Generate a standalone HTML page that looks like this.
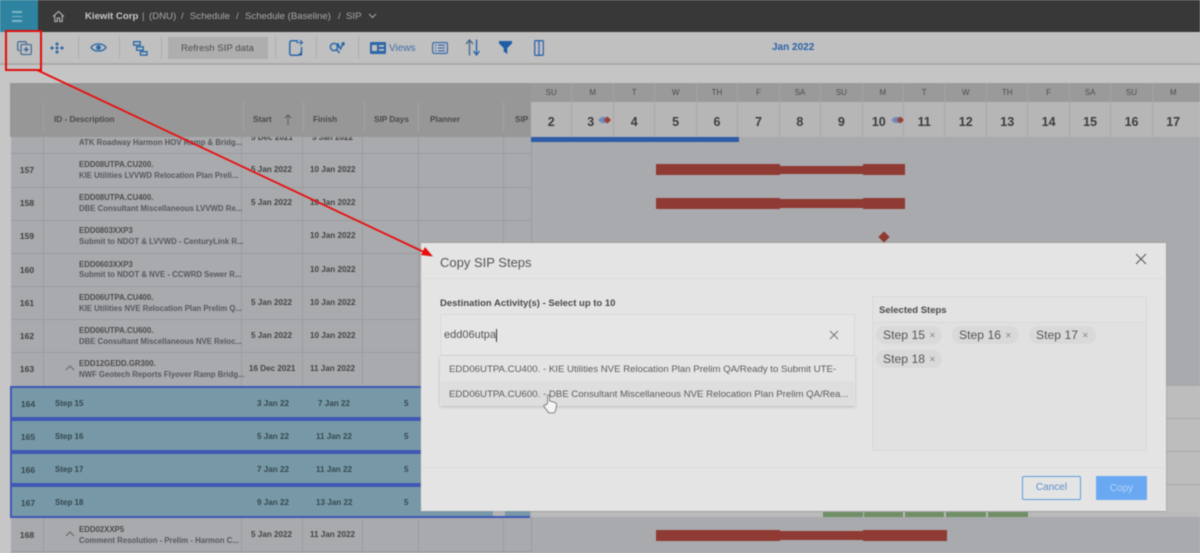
<!DOCTYPE html>
<html><head><meta charset="utf-8">
<style>
*{box-sizing:border-box;margin:0;padding:0}
html,body{width:1200px;height:553px;overflow:hidden;background:#c5c5c5;font-family:"Liberation Sans",sans-serif}
#w{position:absolute;left:0;top:0;width:1200px;height:553px;overflow:hidden;background:#c5c5c5;filter:blur(.4px)}
.a{position:absolute}
.t{position:absolute;white-space:nowrap;color:#444}
.b{font-weight:bold}
.hd{font-size:8.2px;font-weight:bold;color:#4a4a4a;top:115px}
.dw{position:absolute;top:83px;height:19px;width:41.45px;text-align:center;font-size:8px;line-height:19px;color:#4c4c4c;border-right:1px solid #a5a5a5}
.dn{position:absolute;top:102px;height:35px;width:41.45px;text-align:center;font-size:12.5px;line-height:40px;color:#3d3d3d;font-weight:bold;border-right:1px solid #a6a6a6}
.n{position:absolute;left:11px;width:32px;text-align:center;font-size:8.5px;font-weight:bold;color:#3f3f3f;line-height:10px}
.l1{position:absolute;left:79px;font-size:7.8px;font-weight:bold;color:#4c4c4c;white-space:nowrap;line-height:10px}
.l2{position:absolute;left:79px;font-size:7.8px;font-weight:bold;color:#56585c;white-space:nowrap;line-height:10px}
.d{position:absolute;font-size:8.1px;color:#444;white-space:nowrap;line-height:10px;font-weight:bold}
.hl{position:absolute;left:11px;width:520px;height:1px;background:#9a9b9e}
.v{position:absolute;width:1px;background:#9b9c9f}
.sel{position:absolute;left:10px;width:412px;height:33px;background:#7799a7;border:2px solid #3e58b4;border-right:0}
.st{position:absolute;left:55px;font-size:8px;font-weight:bold;color:#34474f;line-height:10px}
.bar{position:absolute;background:#8f3a33}
.chip{position:absolute;height:18px;border-radius:9px;background:#d9d9d9;font-size:12.2px;color:#555;line-height:18px;padding-left:7px;white-space:nowrap}
.chip span{font-size:8px;color:#888;margin-left:4px;position:relative;top:-1px}
.sep{position:absolute;top:36px;width:1px;height:23px;background:#adadad}
.bc{position:absolute;top:11px;font-size:9.6px;color:#a8a8a8;white-space:nowrap}
svg{position:absolute;overflow:visible}
</style></head>
<body><div id="w">
<!-- top bar -->
<div class="a" style="left:0;top:0;width:1200px;height:32px;background:#383838"></div>
<div class="a" style="left:0;top:0;width:38px;height:32px;background:#2e83a1"></div>
<div class="a" style="left:12px;top:11px;width:10px;height:1.5px;background:#7fb5c9"></div>
<div class="a" style="left:12px;top:15.5px;width:10px;height:1.5px;background:#7fb5c9"></div>
<div class="a" style="left:12px;top:20px;width:10px;height:1.5px;background:#7fb5c9"></div>
<svg style="left:52px;top:10px" width="13" height="13" viewBox="0 0 13 13" fill="none" stroke="#b5b5b5" stroke-width="1.1"><path d="M1 6.5 6.5 1.5 12 6.5M2.8 5.5V11.5H5.3V8H7.7V11.5H10.2V5.5"/></svg>
<div class="t b" style="left:85px;top:11px;font-size:9.6px;color:#c8c8c8">Kiewit Corp</div>
<div class="bc" style="left:142px">|</div><div class="bc" style="left:149px">(DNU)</div><div class="bc" style="left:181px">/</div><div class="bc" style="left:190px">Schedule</div><div class="bc" style="left:236px">/</div><div class="bc" style="left:245px">Schedule (Baseline)</div><div class="bc" style="left:338px">/</div><div class="bc" style="left:346px">SIP</div>
<svg style="left:368px;top:13px" width="9" height="6" fill="none" stroke="#a8a8a8" stroke-width="1"><path d="M1 1 4.5 4.5 8 1"/></svg>

<!-- toolbar -->
<div class="a" style="left:0;top:32px;width:1200px;height:32px;background:#c0c0c0"></div>
<div class="a" style="left:0;top:63px;width:1200px;height:2px;background:#a9a9a9"></div>
<div class="sep" style="left:78px"></div><div class="sep" style="left:119px"></div><div class="sep" style="left:161px"></div>
<div class="sep" style="left:275px"></div><div class="sep" style="left:316px"></div><div class="sep" style="left:358px"></div>
<svg style="left:17px;top:41px" width="15" height="14" fill="none" stroke="#4a6f94" stroke-width="1.3"><path d="M3 9.5H2Q.7 9.5 .7 8.2V2Q.7 .7 2 .7H8Q9.3 .7 9.3 2V3"/><rect x="4" y="3.5" width="10.3" height="10" rx="1.2"/><path d="M9.2 6V11M6.7 8.5H11.7" stroke="#2d5f96"/></svg>
<svg style="left:50px;top:42px" width="14" height="12" fill="#2d6aa8"><circle cx="7" cy="6" r="1.5"/><path d="M7 0 9 2 7 4 5 2ZM7 8 9 10 7 12 5 10ZM0 6 2 4 4 6 2 8ZM14 6 12 4 10 6 12 8Z"/></svg>
<svg style="left:90px;top:42px" width="17" height="11" fill="none" stroke="#2d6aa8" stroke-width="1.4"><path d="M1 5.5C4 .8 13 .8 16 5.5 13 10.2 4 10.2 1 5.5Z"/><circle cx="8.5" cy="5.5" r="2.4" fill="#2d6aa8" stroke="none"/></svg>
<svg style="left:133px;top:41px" width="15" height="15" fill="none" stroke="#2d6aa8" stroke-width="1.4"><rect x=".7" y=".7" width="6.5" height="3.4"/><rect x="3.7" y="5.8" width="6.5" height="3.4"/><rect x="7.5" y="10.7" width="6.5" height="3.4"/></svg>
<div class="a" style="left:168px;top:37px;width:100px;height:22px;background:#aeaeae"></div>
<div class="t" style="left:181px;top:43px;font-size:9.6px;color:#4d4d4d">Refresh SIP data</div>
<svg style="left:289px;top:39px" width="15" height="17" fill="none" stroke="#2d6aa8" stroke-width="1.5"><path d="M9 1.8H2.5Q.8 1.8 .8 3.5V14.5Q.8 16.2 2.5 16.2H9.5L12.5 13.5V8"/><path d="M7 3.5H13M11 1 13.5 3.5 11 6" stroke-width="1.1"/><path d="M9 16.5 13 13V16.5Z" fill="#1f56a0" stroke="none"/></svg>
<svg style="left:329px;top:41px" width="17" height="12" fill="none" stroke="#2d6aa8" stroke-width="1.5"><circle cx="5" cy="6" r="3.6"/><path d="M7.5 8.5 10.5 12M8.5 2 11.5 8 15 1"/><circle cx="9" cy="5" r="1" fill="#2d6aa8"/><circle cx="14" cy="3" r="1" fill="#2d6aa8"/></svg>
<svg style="left:370px;top:42px" width="16" height="12"><rect width="16" height="12" rx="1" fill="#2d66aa"/><rect x="2" y="3" width="5" height="6" fill="#c0c0c0"/><rect x="9" y="3" width="5" height="1.8" fill="#c0c0c0"/><rect x="9" y="7" width="5" height="1.8" fill="#c0c0c0"/></svg>
<div class="t" style="left:389px;top:43px;font-size:10px;color:#3f6fa6">Views</div>
<svg style="left:432px;top:42px" width="16" height="12" fill="none" stroke="#2d66aa" stroke-width="1.1"><rect x=".6" y=".6" width="14.8" height="10.8" rx="1.5"/><path d="M3 3.2H4.5M6 3.2H13M3 6H4.5M6 6H13M3 8.8H4.5M6 8.8H13"/></svg>
<svg style="left:465px;top:39px" width="16" height="17" fill="none" stroke="#2d66aa" stroke-width="1.4"><path d="M4.5 16.5V1.5M1 5 4.5 1 8 5" stroke="#4a6a8a"/><path d="M11.5 .5V15.5M8.5 12 11.5 16 14.5 12"/></svg>
<svg style="left:499px;top:41px" width="13" height="13" fill="#1f5fa8"><path d="M0 0H13V2.5L8.3 7V13L4.7 10.5V7L0 2.5Z"/></svg>
<svg style="left:534px;top:40px" width="10" height="16" fill="none" stroke="#2d66aa" stroke-width="1.3"><rect x=".7" y=".7" width="8.6" height="14.6" rx="1"/><path d="M5 1V15"/></svg>
<div class="t b" style="left:772px;top:42px;font-size:10px;color:#2a63a8">Jan 2022</div>

<!-- table header -->
<div class="a" style="left:10px;top:83px;width:521px;height:54px;background:#979797"></div>
<div class="a" style="left:531px;top:83px;width:669px;height:19px;background:#9a9a9a"></div>
<div class="a" style="left:531px;top:102px;width:669px;height:35px;background:#b6b6b6"></div>
<div class="a" style="left:43px;top:102px;width:1px;height:35px;background:#a0a0a0"></div>
<div class="a" style="left:243px;top:102px;width:1px;height:35px;background:#a3a3a3"></div>
<div class="a" style="left:303px;top:102px;width:1px;height:35px;background:#a3a3a3"></div>
<div class="a" style="left:364px;top:102px;width:1px;height:35px;background:#a3a3a3"></div>
<div class="a" style="left:418px;top:102px;width:1px;height:35px;background:#a3a3a3"></div>
<div class="a" style="left:503px;top:102px;width:1px;height:35px;background:#a3a3a3"></div>
<div class="t hd" style="left:54px">ID - Description</div>
<div class="t hd" style="left:253px">Start</div>
<svg style="left:284px;top:114px" width="8" height="11" fill="none" stroke="#5c5c5c"><path d="M4 11V1M1 4 4 1 7 4"/></svg>
<div class="t hd" style="left:313px">Finish</div>
<div class="t hd" style="left:374px">SIP Days</div>
<div class="t hd" style="left:430px">Planner</div>
<div class="t hd" style="left:515px">SIP</div>

<!-- calendar header -->
<div class="dw" style="left:531px">SU</div><div class="dw" style="left:572.5px">M</div><div class="dw" style="left:614px">T</div><div class="dw" style="left:655.4px">W</div><div class="dw" style="left:696.8px">TH</div><div class="dw" style="left:738.3px">F</div><div class="dw" style="left:779.7px">SA</div><div class="dw" style="left:821.2px">SU</div><div class="dw" style="left:862.6px">M</div><div class="dw" style="left:904px">T</div><div class="dw" style="left:945.5px">W</div><div class="dw" style="left:987px">TH</div><div class="dw" style="left:1028.4px">F</div><div class="dw" style="left:1069.9px">SA</div><div class="dw" style="left:1111.3px">SU</div><div class="dw" style="left:1152.7px;width:48px;padding-right:6px">M</div>
<div class="dn" style="left:531px">2</div><div class="dn" style="left:572.5px;padding-right:4px">3</div><div class="dn" style="left:614px">4</div><div class="dn" style="left:655.4px">5</div><div class="dn" style="left:696.8px">6</div><div class="dn" style="left:738.3px">7</div><div class="dn" style="left:779.7px">8</div><div class="dn" style="left:821.2px">9</div><div class="dn" style="left:862.6px;padding-right:8px">10</div><div class="dn" style="left:904px">11</div><div class="dn" style="left:945.5px">12</div><div class="dn" style="left:987px">13</div><div class="dn" style="left:1028.4px">14</div><div class="dn" style="left:1069.9px">15</div><div class="dn" style="left:1111.3px">16</div><div class="dn" style="left:1152.7px;width:48px;padding-right:6px">17</div>
<svg style="left:598px;top:116px" width="15" height="8"><path d="M3 1 0 4 3 7H6V1Z" fill="#7b8fb8"/><path d="M6 1 3 4 6 7H9V1Z" fill="#6a84b5"/><path d="M9.5 .5 13 4 9.5 7.5 6 4Z" fill="#a33a35"/></svg>
<svg style="left:891px;top:116px" width="15" height="8"><path d="M3 1 0 4 3 7H6V1Z" fill="#7b8fb8"/><path d="M6 1 3 4 6 7H9V1Z" fill="#6a84b5"/><path d="M9.5 .5 13 4 9.5 7.5 6 4Z" fill="#a33a35"/></svg>

<!-- body -->
<div class="a" style="left:11px;top:137px;width:1189px;height:416px;background:#a9aaad"></div>
<div class="a" style="left:0;top:83px;width:10px;height:470px;background:#c6c6c6"></div>
<div class="v" style="left:43px;top:137px;height:249px"></div>
<div class="v" style="left:241px;top:137px;height:249px"></div>
<div class="v" style="left:302px;top:137px;height:249px"></div>
<div class="v" style="left:362px;top:137px;height:249px"></div>
<div class="v" style="left:418px;top:137px;height:249px"></div>
<div class="v" style="left:503px;top:137px;height:249px"></div>
<div class="v" style="left:531px;top:137px;height:416px"></div>
<div class="hl" style="top:153px"></div><div class="hl" style="top:187px"></div><div class="hl" style="top:220px"></div><div class="hl" style="top:253px"></div><div class="hl" style="top:286px"></div><div class="hl" style="top:319px"></div><div class="hl" style="top:352px"></div><div class="hl" style="top:551px"></div>
<div class="v" style="left:43px;top:518px;height:35px"></div>
<div class="v" style="left:241px;top:518px;height:35px"></div>
<div class="v" style="left:302px;top:518px;height:35px"></div>
<div class="v" style="left:362px;top:518px;height:35px"></div>
<div class="v" style="left:418px;top:518px;height:35px"></div>
<div class="v" style="left:503px;top:518px;height:35px"></div>

<div class="l2" style="top:138px">ATK Roadway Harmon HOV Ramp &amp; Bridg...</div>
<div class="d" style="left:251px;top:133px">5 Dec 2021</div><div class="d" style="left:312px;top:133px">5 Jan 2022</div>
<div class="a" style="left:10px;top:132px;width:521px;height:5px;background:#979797"></div>

<div class="n" style="top:165px">157</div><div class="l1" style="top:160px">EDD08UTPA.CU200.</div><div class="l2" style="top:171px">KIE Utilities LVVWD Relocation Plan Preli...</div><div class="d" style="left:251px;top:165px">5 Jan 2022</div><div class="d" style="left:310px;top:165px">10 Jan 2022</div>
<div class="n" style="top:198px">158</div><div class="l1" style="top:193px">EDD08UTPA.CU400.</div><div class="l2" style="top:204px">DBE Consultant Miscellaneous LVVWD Re...</div><div class="d" style="left:251px;top:198px">5 Jan 2022</div><div class="d" style="left:310px;top:198px">10 Jan 2022</div>
<div class="n" style="top:231px">159</div><div class="l1" style="top:226px">EDD0803XXP3</div><div class="l2" style="top:237px">Submit to NDOT &amp; LVVWD - CenturyLink R...</div><div class="d" style="left:310px;top:231px">10 Jan 2022</div>
<div class="n" style="top:265px">160</div><div class="l1" style="top:260px">EDD0603XXP3</div><div class="l2" style="top:270px">Submit to NDOT &amp; NVE - CCWRD Sewer R...</div><div class="d" style="left:310px;top:265px">10 Jan 2022</div>
<div class="n" style="top:298px">161</div><div class="l1" style="top:293px">EDD06UTPA.CU400.</div><div class="l2" style="top:304px">KIE Utilities NVE Relocation Plan Prelim Q...</div><div class="d" style="left:251px;top:298px">5 Jan 2022</div><div class="d" style="left:310px;top:298px">10 Jan 2022</div>
<div class="n" style="top:331px">162</div><div class="l1" style="top:326px">EDD06UTPA.CU600.</div><div class="l2" style="top:337px">DBE Consultant Miscellaneous NVE Reloc...</div><div class="d" style="left:251px;top:331px">5 Jan 2022</div><div class="d" style="left:310px;top:331px">10 Jan 2022</div>
<div class="n" style="top:364px">163</div><div class="l1" style="top:359px">EDD12GEDD.GR300.</div><div class="l2" style="top:370px">NWF Geotech Reports Flyover Ramp Bridg...</div><div class="d" style="left:249px;top:364px">16 Dec 2021</div><div class="d" style="left:310px;top:364px">11 Jan 2022</div>
<svg style="left:65px;top:365px" width="10" height="6" fill="none" stroke="#666"><path d="M1 5 5 1 9 5"/></svg>

<!-- right light area behind selected rows -->
<div class="a" style="left:1166px;top:386px;width:34px;height:131px;background:#bdbdbd"></div>
<div class="a" style="left:1166px;top:418px;width:34px;height:1px;background:#a9a9a9"></div>
<div class="a" style="left:1166px;top:451px;width:34px;height:1px;background:#a9a9a9"></div>
<div class="a" style="left:1166px;top:484px;width:34px;height:1px;background:#a9a9a9"></div>

<!-- selected rows -->
<div class="sel" style="top:386px"></div><div class="sel" style="top:419px"></div><div class="sel" style="top:452px"></div><div class="sel" style="top:485px"></div>
<div class="a" style="left:10px;top:511px;width:520px;height:7px;background:#7799a7;border-bottom:2px solid #3e58b4;border-left:2px solid #3e58b4"></div>
<div class="a" style="left:493px;top:511px;width:12px;height:5px;background:#b5b5b5"></div>
<div class="a" style="left:531px;top:512px;width:669px;height:5px;background:#bababa"></div>
<div class="n" style="top:399px;left:12px;color:#36474f">164</div><div class="st" style="top:399px">Step 15</div><div class="d" style="left:257px;top:399px;color:#36474f">3 Jan 22</div><div class="d" style="left:318px;top:399px;color:#36474f">7 Jan 22</div><div class="d" style="left:404px;top:399px;color:#36474f">5</div>
<div class="n" style="top:432px;left:12px;color:#36474f">165</div><div class="st" style="top:432px">Step 16</div><div class="d" style="left:257px;top:432px;color:#36474f">5 Jan 22</div><div class="d" style="left:316px;top:432px;color:#36474f">11 Jan 22</div><div class="d" style="left:404px;top:432px;color:#36474f">5</div>
<div class="n" style="top:465px;left:12px;color:#36474f">166</div><div class="st" style="top:465px">Step 17</div><div class="d" style="left:257px;top:465px;color:#36474f">7 Jan 22</div><div class="d" style="left:316px;top:465px;color:#36474f">11 Jan 22</div><div class="d" style="left:404px;top:465px;color:#36474f">5</div>
<div class="n" style="top:498px;left:12px;color:#36474f">167</div><div class="st" style="top:498px">Step 18</div><div class="d" style="left:257px;top:498px;color:#36474f">9 Jan 22</div><div class="d" style="left:316px;top:498px;color:#36474f">13 Jan 22</div><div class="d" style="left:404px;top:498px;color:#36474f">5</div>

<div class="n" style="top:530px">168</div><div class="l1" style="top:525px">EDD02XXP5</div><div class="l2" style="top:536px">Comment Resolution - Prelim - Harmon C...</div><div class="d" style="left:251px;top:530px">5 Jan 2022</div><div class="d" style="left:310px;top:530px">11 Jan 2022</div>
<svg style="left:65px;top:531px" width="10" height="6" fill="none" stroke="#666"><path d="M1 5 5 1 9 5"/></svg>

<!-- gantt -->
<div class="a" style="left:531px;top:137px;width:208px;height:5px;background:#2f5ca6"></div>
<div class="bar" style="left:656px;top:164px;width:124px;height:11px"></div><div class="bar" style="left:780px;top:165.5px;width:83px;height:8.5px"></div><div class="bar" style="left:863px;top:164px;width:42px;height:11px"></div>
<div class="bar" style="left:656px;top:197.5px;width:124px;height:11px"></div><div class="bar" style="left:780px;top:199px;width:83px;height:8.5px"></div><div class="bar" style="left:863px;top:197.5px;width:42px;height:11px"></div>
<div class="bar" style="left:880px;top:232.5px;width:8px;height:8px;transform:rotate(45deg)"></div>
<div class="bar" style="left:656px;top:530px;width:124px;height:10.5px"></div><div class="bar" style="left:780px;top:531px;width:83px;height:8.5px"></div><div class="bar" style="left:863px;top:530px;width:84px;height:10.5px"></div>
<div class="a" style="left:823px;top:512px;width:40px;height:5px;background:#6f8f65"></div><div class="a" style="left:864px;top:512px;width:39px;height:5px;background:#6f8f65"></div><div class="a" style="left:905px;top:512px;width:39px;height:5px;background:#6f8f65"></div><div class="a" style="left:946px;top:512px;width:40px;height:5px;background:#6f8f65"></div><div class="a" style="left:988px;top:512px;width:40px;height:5px;background:#6f8f65"></div>

<!-- dialog -->
<div class="a" style="left:421px;top:243px;width:745px;height:268px;background:#e4e4e4;box-shadow:0 0 2px #999"></div>
<div class="t" style="left:440px;top:255px;font-size:13px;color:#555">Copy SIP Steps</div>
<svg style="left:1136px;top:254px" width="10" height="10" stroke="#555"><path d="M0 0 10 10M10 0 0 10"/></svg>
<div class="a" style="left:422px;top:278px;width:743px;height:1px;background:#dcdcdc"></div>
<div class="t b" style="left:440px;top:298px;font-size:9.5px;color:#4a4a4a">Destination Activity(s) - Select up to 10</div>
<div class="a" style="left:440px;top:314px;width:415px;height:42px;background:#e6e6e6;border:1px solid #d8d8d8"></div>
<div class="t" style="left:444px;top:329px;font-size:11px;color:#555">edd06utpa</div>
<div class="a" style="left:496px;top:329px;width:1px;height:13px;background:#333"></div>
<svg style="left:830px;top:331px" width="8" height="8" stroke="#777"><path d="M0 0 8 8M8 0 0 8"/></svg>
<div class="a" style="left:440px;top:356px;width:415px;height:50px;background:#e4e4e4;box-shadow:0 1px 3px #bbb"></div>
<div class="a" style="left:441px;top:381px;width:413px;height:25px;background:#dedede"></div>
<div class="t" style="left:449px;top:364px;font-size:9.65px;color:#5c5c5c">EDD06UTPA.CU400. - KIE Utilities NVE Relocation Plan Prelim QA/Ready to Submit UTE-</div>
<div class="t" style="left:449px;top:389px;font-size:9.65px;color:#5c5c5c">EDD06UTPA.CU600. - DBE Consultant Miscellaneous NVE Relocation Plan Prelim QA/Rea...</div>
<svg style="left:543px;top:394px" width="15" height="20"><path d="M4.5 9V2C4.5 .5 6.5 .5 6.5 2V7L12 8.5C13.5 9 14 10 13.5 12L12.5 17C12 18.5 11 19 9.5 19H7C6 19 5.3 18.5 4.7 17.5L1 12.5C.3 11.3 1.8 10 3 11Z" fill="#f4f4f4" stroke="#6a6a6a" stroke-width=".8"/></svg>
<div class="a" style="left:872px;top:296px;width:275px;height:155px;background:#e1e1e1;border:1px solid #d8d8d8"></div>
<div class="a" style="left:873px;top:297px;width:273px;height:26px;background:#e3e3e3;border-bottom:1px solid #d8d8d8"></div>
<div class="t b" style="left:879px;top:305px;font-size:9.5px;color:#4a4a4a">Selected Steps</div>
<div class="chip" style="left:876px;top:326px;width:66px">Step 15<span>✕</span></div>
<div class="chip" style="left:952px;top:326px;width:67px">Step 16<span>✕</span></div>
<div class="chip" style="left:1029px;top:326px;width:67px">Step 17<span>✕</span></div>
<div class="chip" style="left:876px;top:350px;width:66px">Step 18<span>✕</span></div>
<div class="a" style="left:422px;top:467px;width:743px;height:1px;background:#dcdcdc"></div>
<div class="a" style="left:1022px;top:476px;width:59px;height:24px;border:1.5px solid #5c9bdc;border-radius:2px;text-align:center;font-size:10px;line-height:22px;color:#5a8fc8">Cancel</div>
<div class="a" style="left:1096px;top:476px;width:51px;height:24px;background:#6aa9f2;border-radius:1px;text-align:center;font-size:10px;line-height:25px;color:#b3d3f5">Copy</div>

<!-- annotation -->
<div class="a" style="left:5px;top:30px;width:37px;height:41px;border:2px solid #e00d0d"></div>
<svg style="left:0;top:0" width="1200" height="553"><path d="M37 70 426 253" stroke="#e80f0f" stroke-width="1.8" fill="none"/><path d="M433 256.5 421 255 425 247Z" fill="#e80f0f"/></svg>
</div></body></html>
